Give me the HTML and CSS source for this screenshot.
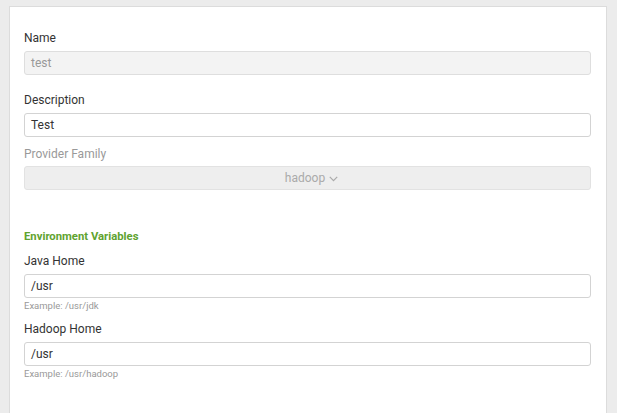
FILE: index.html
```html
<!DOCTYPE html>
<html>
<head>
<meta charset="utf-8">
<link rel="stylesheet" href="styles.css">
</head>
<body>
<div class="panel">
  <div class="group g-name">
    <label class="lbl">Name</label>
    <div class="field disabled">test</div>
  </div>
  <div class="group g-desc">
    <label class="lbl">Description</label>
    <div class="field">Test</div>
  </div>
  <div class="group g-prov">
    <label class="lbl muted">Provider Family</label>
    <div class="select">hadoop<svg class="chev" width="9" height="6" viewBox="0 0 9 6"><path d="M0.8 0.8 L4.5 4.6 L8.2 0.8" fill="none" stroke="#aaa" stroke-width="1.2"/></svg></div>
  </div>
  <div class="section">Environment Variables</div>
  <div class="group g-java">
    <label class="lbl">Java Home</label>
    <div class="field">/usr</div>
    <div class="hint">Example: /usr/jdk</div>
  </div>
  <div class="group g-hadoop">
    <label class="lbl">Hadoop Home</label>
    <div class="field">/usr</div>
    <div class="hint">Example: /usr/hadoop</div>
  </div>
</div>
</body>
</html>
```

FILE: styles.css
```css
html, body {
  margin: 0;
  padding: 0;
  background: #ececec;
  height: 100%;
  overflow: hidden;
}
body {
  font-family: Roboto, "Liberation Sans", Arial, sans-serif;
  color: #333;
}
.panel {
  box-sizing: border-box;
  margin: 6px 0 0 9px;
  width: 598px;
  height: 407px;
  overflow: hidden;
  padding: 23px 15px 0 14px;
  background: #fff;
  border: 1px solid #dcdcdc;
  border-bottom: none;
}
.group {
  display: flex;
  flex-direction: column;
}
.lbl {
  display: block;
  font-size: 12px;
  line-height: 16px;
  height: 16px;
  margin-bottom: 5px;
  color: #333;
}
.lbl.muted {
  color: #999;
  margin-bottom: 4px;
}
.field {
  box-sizing: border-box;
  height: 24px;
  border: 1px solid #d3d3d3;
  border-radius: 3px;
  padding: 0 6px;
  font-size: 12px;
  line-height: 22px;
  color: #333;
  background: #fff;
}
.field.disabled {
  background: #f3f3f3;
  color: #999;
  border-color: #dedede;
}
.g-name { margin-bottom: 17px; }
.g-desc { margin-bottom: 9px; }
.select {
  box-sizing: border-box;
  height: 24px;
  border: 1px solid #e2e2e2;
  border-radius: 3px;
  background: #eeeeee;
  color: #aaa;
  font-size: 12px;
  line-height: 22px;
  display: flex;
  justify-content: center;
  align-items: center;
  gap: 4px;
  padding-left: 8px;
}
.chev { display: block; margin-top: 1px; }
.section {
  margin-top: 39px;
  font-size: 11.3px;
  line-height: 16px;
  font-weight: bold;
  color: #5fa330;
  margin-bottom: 8px;
}
.hint {
  font-size: 9.5px;
  line-height: 12px;
  margin-top: 2px;
  color: #999;
}
.g-java { margin-bottom: 9px; }
```
